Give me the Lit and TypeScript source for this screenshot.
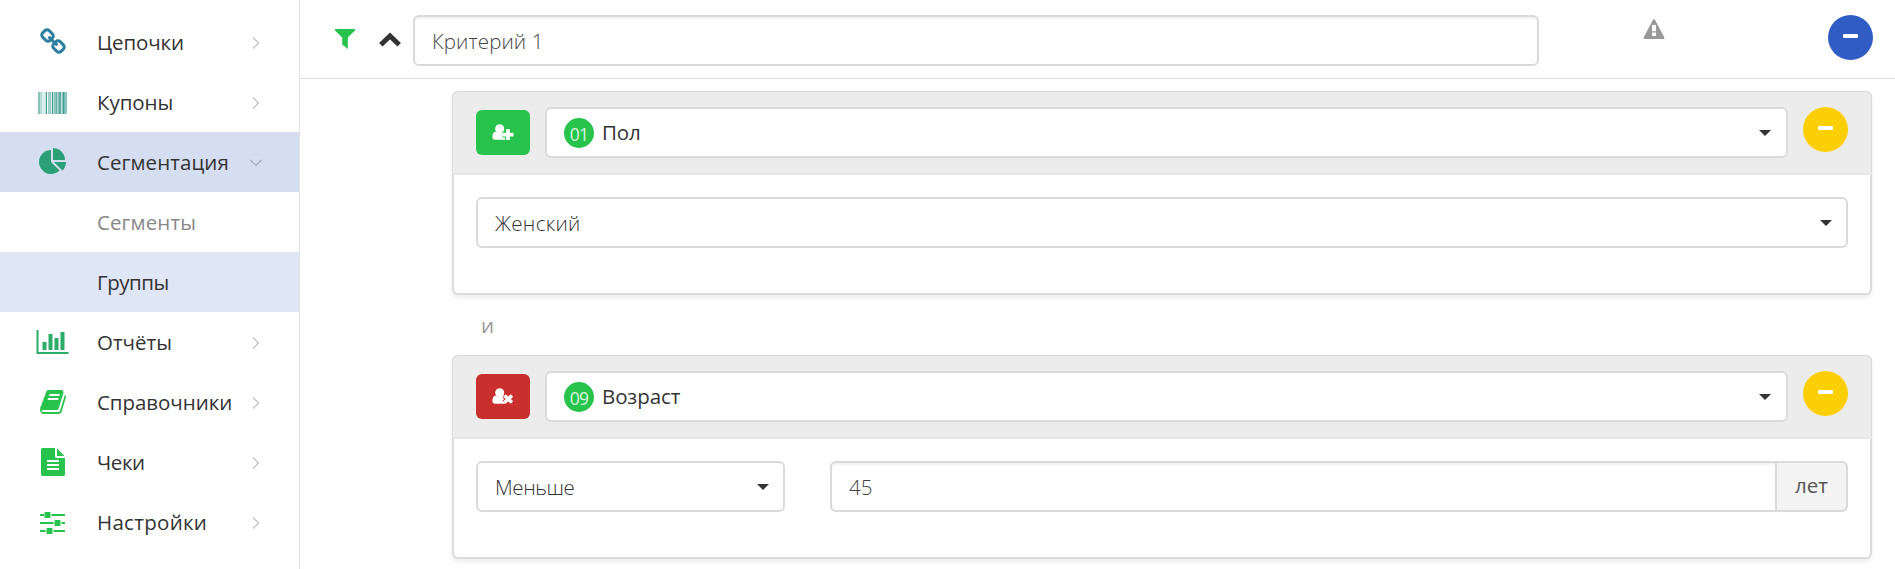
import { LitElement, html, css, svg, nothing } from "lit";
import { customElement, property } from "lit/decorators.js";
import { classMap } from "lit/directives/class-map.js";
import { styleMap } from "lit/directives/style-map.js";

const icons: Record<string, any> = {
  link: svg`<svg class="fa" viewBox="0 0 1792 1792"><path d="M1520 1216q0-40-28-68l-208-208q-28-28-68-28-42 0-72 32 3 3 19 18.5t21.5 21.5 15 19 13 25.5 3.5 27.5q0 40-28 68t-68 28q-15 0-27.5-3.5t-25.5-13-19-15-21.5-21.5-18.5-19q-33 31-33 73 0 40 28 68l206 207q27 27 68 27 40 0 68-26l147-146q28-28 28-67zm-703-705q0-40-28-68l-206-207q-28-28-68-28-39 0-68 27l-147 146q-28 28-28 67 0 40 28 68l208 208q27 27 68 27 42 0 72-31-3-3-19-18.5t-21.5-21.5-15-19-13-25.5-3.5-27.5q0-40 28-68t68-28q15 0 27.5 3.5t25.5 13 19 15 21.5 21.5 18.5 19q33-31 33-73zm895 705q0 120-85 203l-147 146q-83 83-203 83-121 0-204-85l-206-207q-83-83-83-203 0-123 88-209l-88-88q-86 88-208 88-120 0-204-84l-208-208q-84-84-84-204t85-203l147-146q83-83 203-83 121 0 204 85l206 207q83 83 83 203 0 123-88 209l88 88q86-88 208-88 120 0 204 84l208 208q84 84 84 204z"/></svg>`,
  barcode: svg`<svg class="barcode" viewBox="0 0 29 22"><rect width="2" height="22" opacity=".62"/><rect x="2" width="2" height="22" opacity=".38"/><rect x="4" width="3" height="22" opacity=".18"/><rect x="7" width="1" height="22" opacity=".3"/><rect x="8" width="1" height="22"/><rect x="10" width="3" height="22" opacity=".5"/><rect x="13" width="1" height="22" opacity=".2"/><rect x="14" width="1" height="22"/><rect x="15" width="1" height="22" opacity=".35"/><rect x="16" width="2" height="22" opacity=".6"/><rect x="18" width="1" height="22" opacity=".8"/><rect x="19" width="1" height="22" opacity=".4"/><rect x="20" width="1" height="22" opacity=".65"/><rect x="21" width="2" height="22" opacity=".85"/><rect x="23" width="1" height="22" opacity=".3"/><rect x="24" width="1" height="22" opacity=".6"/><rect x="25" width="1" height="22"/><rect x="26" width="1" height="22" opacity=".7"/><rect x="27" width="2" height="22" opacity=".6"/></svg>`,
  pie: svg`<svg class="fa" viewBox="0 0 1792 1792"><path d="M768 890l546 546q-106 108-247.5 168t-298.5 60q-209 0-385.5-103t-279.5-279.5-103-385.5 103-385.5 279.5-279.5 385.5-103v762zm187 6h773q0 157-60 298.5t-168 247.5zm709-128h-768v-768q209 0 385.5 103t279.5 279.5 103 385.5z"/></svg>`,
  chart: svg`<svg class="chart" viewBox="0 0 2048 1792"><path d="M640 896v512h-256v-512h256zm384-512v1024h-256v-1024h256zm1024 1152v128h-2048v-1536h128v1408h1920zm-640-896v768h-256v-768h256zm384-384v1152h-256v-1152h256z"/></svg>`,
  book: svg`<svg class="fa" viewBox="0 0 1792 1792"><path d="M1703 478q40 57 18 129l-275 906q-19 64-76.5 107.5t-122.5 43.5h-923q-77 0-148.5-53.5t-99.5-131.5q-24-67-2-127 0-4 3-27t4-37q1-8-3-21.5t-3-19.5q2-11 8-21t16.5-23.5 16.5-23.5q23-38 45-91.5t30-91.5q3-10 .5-30t-.5-28q3-11 17-28t17-23q21-36 42-92t25-90q1-9-2.5-32t.5-28q4-13 22-30.5t22-22.5q19-26 42.5-84.5t27.5-96.5q1-8-3-25.5t-2-26.5q2-8 9-18t18-23 17-21q8-12 16.5-30.5t15-35 16-36 19.5-32 26.5-23.5 36-11.5 47.5 5.5l-1 3q38-9 51-9h761q74 0 114 56t18 130l-274 906q-36 119-71.5 153.5t-128.5 34.5h-869q-27 0-38 15-11 16-1 43 24 70 144 70h923q29 0 56-15.5t35-41.5l300-987q7-22 5-57 38 15 59 43zm-1064 2q-4 13 2 22.5t20 9.5h608q13 0 25.5-9.5t16.5-22.5l21-64q4-13-2-22.5t-20-9.5h-608q-13 0-25.5 9.5t-16.5 22.5zm-83 256q-4 13 2 22.5t20 9.5h608q13 0 25.5-9.5t16.5-22.5l21-64q4-13-2-22.5t-20-9.5h-608q-13 0-25.5 9.5t-16.5 22.5z"/></svg>`,
  file: svg`<svg class="fa" viewBox="0 0 1792 1792"><path d="M1596 476q14 14 28 36h-472v-472q22 14 36 28zm-476 164h544v1056q0 40-28 68t-68 28h-1344q-40 0-68-28t-28-68v-1600q0-40 28-68t68-28h800v544q0 40 28 68t68 28zm160 736v-64q0-14-9-23t-23-9h-704q-14 0-23 9t-9 23v64q0 14 9 23t23 9h704q14 0 23-9t9-23zm0-256v-64q0-14-9-23t-23-9h-704q-14 0-23 9t-9 23v64q0 14 9 23t23 9h704q14 0 23-9t9-23zm0-256v-64q0-14-9-23t-23-9h-704q-14 0-23 9t-9 23v64q0 14 9 23t23 9h704q14 0 23-9t9-23z"/></svg>`,
  sliders: svg`<svg class="sliders" viewBox="0 0 25 22"><path d="M0 2h4v2H0zM11.500 2H25v2H11.500zM0 10h13.500v2H0zM21.500 10H25v2h-3.500zM0 18h5.500v2H0zM13.500 18H25v2H13.500z"/><rect x="4.500" width="6" height="6" rx=".8"/><rect x="14.500" y="8" width="6" height="6" rx=".8"/><rect x="6.500" y="16" width="6" height="6" rx=".8"/></svg>`,
};

const menu = [
  { icon: "link", label: "Цепочки", track: -0.1 },
  { icon: "barcode", label: "Купоны", track: -0.05 },
  { icon: "pie", label: "Сегментация", track: 0.07, state: "open" },
  { label: "Сегменты", track: 0.1, state: "muted", child: true },
  { label: "Группы", track: -0.5, state: "current", child: true },
  { icon: "chart", label: "Отчёты", track: 0 },
  { icon: "book", label: "Справочники", track: -0.05 },
  { icon: "file", label: "Чеки", track: -0.4 },
  { icon: "sliders", label: "Настройки", track: 0.3 },
];

@customElement("nav-item")
class NavItem extends LitElement {
  @property() label = "";
  @property() icon = "";
  @property() state = "";
  @property({ type: Number }) track = 0;
  @property({ type: Boolean }) child = false;

  static styles = css`
    :host { display: block; }
    .row { display: flex; align-items: center; height: 60px; box-sizing: border-box; padding: 0 37px 0 29px; color: #333; }
    .open { background: #d5ddf1; }
    .current { background: #dfe6f5; }
    .muted { color: #888; }
    .icon { display: flex; justify-content: center; align-items: center; width: 47px; height: 32px; margin-right: 21px; }
    .label { flex: 1; white-space: nowrap; line-height: 30px; padding-bottom: 1px; }
    .fa { width: 28px; height: 28px; fill: currentColor; }
    .chart { width: 33px; height: 28px; fill: currentColor; }
    .barcode { width: 29px; height: 22px; fill: currentColor; margin-top: 2px; }
    .sliders { width: 25px; height: 22px; fill: currentColor; margin-top: 2px; }
    .tone-link { color: #2c7f9f; }
    .tone-barcode { color: #3f9e92; }
    .tone-pie { color: #2b9f78; }
    .tone-chart { color: #2dab68; }
    .tone-book, .tone-file, .tone-sliders { color: #28c34d; }
    .arrow { width: 12px; height: 12px; fill: none; stroke: #bbb; stroke-width: 1.2; flex: none; padding-top: 1px; }
    .open .arrow { stroke: #a3a9b9; }
  `;

  render() {
    return html`<div class=${classMap({ row: true, open: this.state === "open", current: this.state === "current", muted: this.state === "muted" })}>
      <div class="icon tone-${this.icon || "none"}">${this.icon ? icons[this.icon] : nothing}</div>
      <div class="label" style=${styleMap({ letterSpacing: `${this.track}px` })}>${this.label}</div>
      ${this.child ? nothing : html`<svg class="arrow" viewBox="0 0 12 12"><path d=${this.state === "open" ? "M.5 3L6 8.500 11.500 3" : "M3 .5L8.500 6 3 11.500"} /></svg>`}
    </div>`;
  }
}

@customElement("round-minus")
class RoundMinus extends LitElement {
  static styles = css`
    :host { display: flex; justify-content: center; width: 45px; height: 45px; border-radius: 50%; flex: none; }
    .bar { width: 15px; height: 4px; margin: 19px 1px 0 0; border-radius: 1px; background: #fff; }
  `;
  render() {
    return html`<div class="bar"></div>`;
  }
}

@customElement("select-box")
class SelectBox extends LitElement {
  @property() value = "";
  @property() code = "";

  static styles = css`
    :host { display: block; min-width: 0; }
    .box { display: flex; align-items: center; box-sizing: border-box; height: 51px; padding: 0 14px 0 17px; border: 2px solid #dadada; border-radius: 6px; background: #fff; color: #333; }
    .badge { width: 30px; height: 30px; margin: 0 8px 0 0; border-radius: 50%; background: #28c34d; color: #d9f5df; font-size: 17.5px; line-height: 32px; text-align: center; letter-spacing: -.7px; }
    .value { flex: 1; font-weight: 300; color: #333; }
    .coded { font-weight: 400; letter-spacing: -.1px; padding-bottom: 1px; }
    .coded-caret { margin-right: 1px; }
    .caret { width: 12px; height: 6px; fill: #333; }
  `;
  render() {
    return html`<div class="box">
      ${this.code ? html`<span class="badge">${this.code}</span>` : nothing}
      <span class=${classMap({ value: true, coded: !!this.code })}>${this.value}</span>
      <svg class="caret ${this.code ? "coded-caret" : ""}" viewBox="0 0 12 6"><path d="M0 0h12L6 6z" /></svg>
    </div>`;
  }
}

@customElement("condition-card")
class ConditionCard extends LitElement {
  @property() code = "";
  @property() name = "";
  @property({ type: Boolean }) exclude = false;

  static styles = css`
    :host { display: block; }
    .card { box-sizing: border-box; height: 204px; border-radius: 6px; background: #fff; border: 2px solid #dcdcdc; border-top: 0; box-shadow: 0 3px 4px rgba(0, 0, 0, .07); }
    .head { display: flex; box-sizing: border-box; height: 84px; margin: 0 -2px; padding: 15px 23px 0; background: #ececec; border: 1px solid #dadada; border-bottom: 2px solid #e8e8e8; border-radius: 6px 6px 0 0; }
    .kind { display: flex; align-items: center; justify-content: center; width: 54px; height: 45px; margin: 3px 15px 0 0; border-radius: 6px; background: #28c34d; }
    .exclude { background: #c92f2c; }
    .who { width: 22px; height: 16px; fill: #fff; margin-top: -2px; }
    .cut { stroke: #28c34d; stroke-width: 5.600; }
    .exclude .cut { stroke: #c92f2c; }
    .mark { stroke: #fff; stroke-width: 3.600; }
    select-box { flex: 1; margin-right: 15px; }
    round-minus { background: #fccf04; }
    .body { padding: 22px; }
  `;
  render() {
    const sign = this.exclude ? "M12.500 7.500l7.500 7M20 7.500l-7.500 7" : "M10.500 10.600h11M16 5.100v11";
    return html`<div class="card">
      <div class="head">
        <div class=${classMap({ kind: true, exclude: this.exclude })}>
          <svg class="who" viewBox="0 0 22 16">
            <circle cx="7.700" cy="4.700" r="4.500" />
            <path d="M4 7.500Q7.700 10.500 11.500 7.500Q15 8.500 14.500 15.700H3Q.4 15.700.4 12.800Q.4 8 4 7.500z" />
            <path class="cut" d=${sign} />
            <path class="mark" d=${sign} />
          </svg>
        </div>
        <select-box .code=${this.code} .value=${this.name}></select-box>
        <round-minus></round-minus>
      </div>
      <div class="body"><slot></slot></div>
    </div>`;
  }
}

@customElement("app-root")
class AppRoot extends LitElement {
  static styles = css`
    :host { display: flex; width: 100%; height: 569px; overflow: hidden; background: #fff; font: 400 20.5px/30px "Open Sans", "Noto Sans", sans-serif; color: #333; }
    .side { width: 299px; flex: none; border-right: 1px solid #e3e3e3; padding-top: 12px; }
    .main { flex: 1; min-width: 0; }
    .top { display: flex; align-items: flex-start; box-sizing: border-box; height: 79px; padding: 15px 22px 0 35px; border-bottom: 1px solid #dcdcdc; }
    .filter { width: 20px; height: 20px; margin: 14px 24px 0 0; fill: #28c34d; }
    .up { width: 22px; height: 15px; margin: 17px 12px 0 0; fill: none; stroke: #333; stroke-width: 5; }
    .input { box-sizing: border-box; height: 51px; padding: 9px 17px; border: 2px solid #dadada; border-radius: 6px; box-shadow: inset 0 2px 2px rgba(0, 0, 0, .06); font-weight: 300; color: #444; }
    .title { width: 1126px; letter-spacing: .1px; }
    .warn { width: 22px; height: 20px; margin: 4px 0 0 104px; fill: #999; }
    .top round-minus { background: #2f5dc4; margin-left: auto; }
    .list { padding: 12px 23px 0 152px; }
    .and { height: 60px; padding: 16px 0 0 29px; box-sizing: border-box; color: #999; line-height: 28px; }
    .wide { letter-spacing: .3px; }
    .age { display: flex; }
    .compare { width: 309px; margin-right: 45px; letter-spacing: -.4px; }
    .years { flex: 1; border-radius: 6px 0 0 6px; border-right: 0; }
    .unit { box-sizing: border-box; width: 73px; height: 51px; padding: 7px 0 0 18px; border: 2px solid #dadada; border-radius: 0 6px 6px 0; background: #f4f4f4; color: #555; }
  `;

  render() {
    return html`
      <div class="side">
        ${menu.map((m) => html`<nav-item .icon=${m.icon ?? ""} .label=${m.label} .track=${m.track} .state=${m.state ?? ""} .child=${!!m.child}></nav-item>`)}
      </div>
      <div class="main">
        <div class="top">
          <svg class="filter" viewBox="0 0 20 20"><path d="M0 0h20v1.500L12.800 8.500V20L7.200 15.500V8.500L0 1.500z" /></svg>
          <svg class="up" viewBox="0 0 22 15"><path d="M1.800 12.800L11 4l9.200 8.800" /></svg>
          <div class="input title">Критерий 1</div>
          <svg class="warn" viewBox="0 0 22 20"><path fill-rule="evenodd" d="M10.200.5Q11 -.5 11.800.5L21.300 18.300Q21.600 20 20.300 20H1.700Q.4 20 .7 18.300zM9 6v6.200h4V6zM9 13.600v3.400h4v-3.400z" /></svg>
          <round-minus></round-minus>
        </div>
        <div class="list">
          <condition-card code="01" name="Пол">
            <select-box class="wide" value="Женский"></select-box>
          </condition-card>
          <div class="and">и</div>
          <condition-card code="09" name="Возраст" exclude>
            <div class="age">
              <select-box class="compare" value="Меньше"></select-box>
              <div class="input years">45</div>
              <div class="unit">лет</div>
            </div>
          </condition-card>
        </div>
      </div>
    `;
  }
}
